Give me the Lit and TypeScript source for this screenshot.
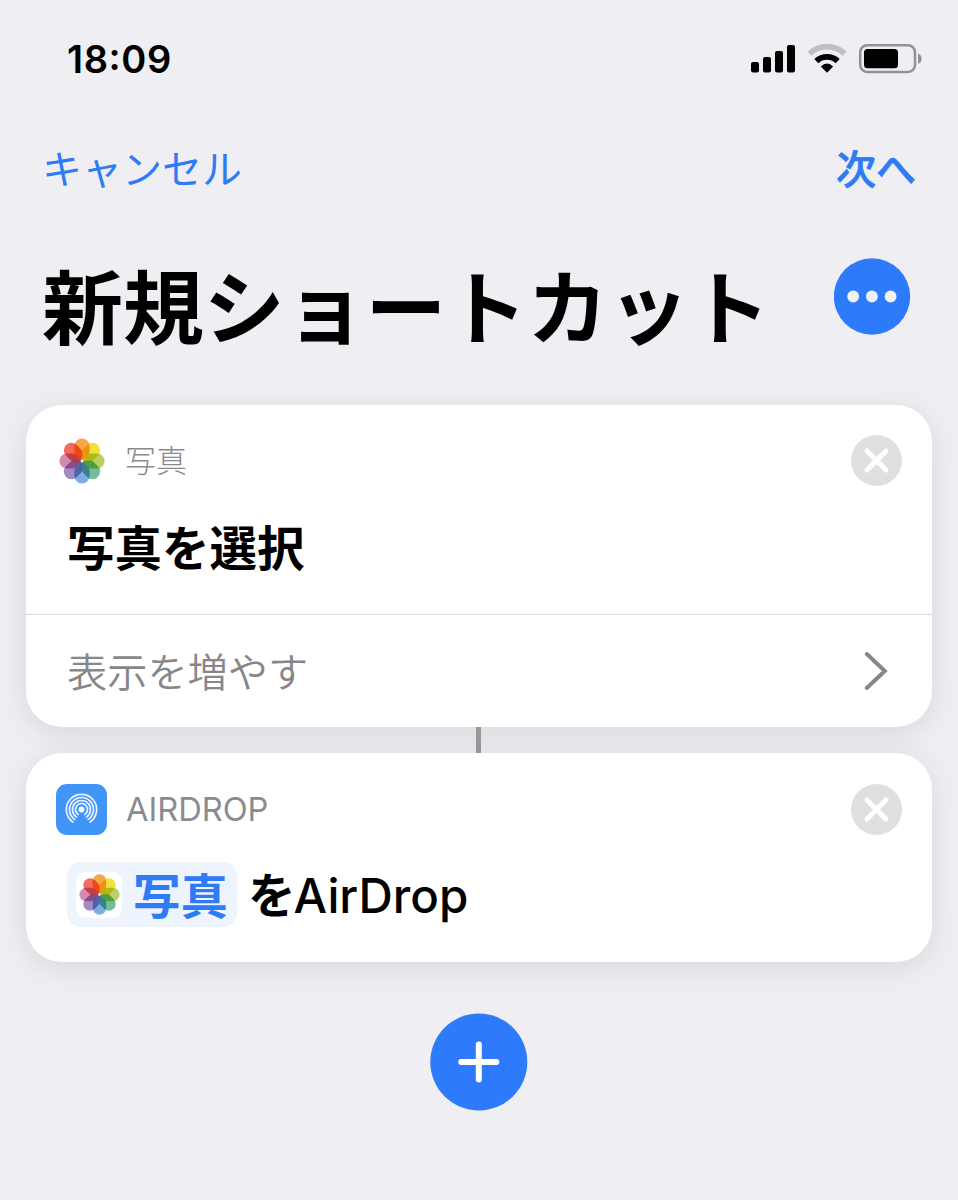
import { LitElement, html, css, svg } from "lit";
import { customElement } from "lit/decorators.js";

const PETALS = ["#f99b30", "#eedf28", "#b0cd50", "#62b792", "#6ea5e0", "#977fbe", "#cd80ac", "#f05c48"];
const PETAL_PATH =
  "M-7.6 -15A7.6 7.6 0 0 1 7.6 -15V-9.4Q7.6 -7.4 6.1 -5.9L1 -1Q0 -0.4 -1 -1L-6.1 -5.9Q-7.6 -7.4 -7.6 -9.4Z";

@customElement("photos-icon")
class PhotosIcon extends LitElement {
  static styles = css`
    :host { display: block; }
    svg { display: block; width: 100%; height: 100%; isolation: isolate; }
    path { mix-blend-mode: multiply; }
  `;
  render() {
    return html`<svg viewBox="-23 -23 46 46">
      ${PETALS.map((c, i) => svg`<path d=${PETAL_PATH} fill=${c} fill-opacity="0.9" transform="rotate(${i * 45})"></path>`)}
      <circle r="1.4" fill="#fff"></circle>
    </svg>`;
  }
}

@customElement("airdrop-icon")
class AirdropIcon extends LitElement {
  static styles = css`
    :host { display: block; width: 51px; height: 51px; border-radius: 11px; background: #4195f7; }
    svg { display: block; }
  `;
  arc(r: number) {
    const a = (34 * Math.PI) / 180;
    const x = r * Math.sin(a);
    const y = r * Math.cos(a);
    return svg`<path d="M${-x} ${y}A${r} ${r} 0 1 1 ${x} ${y}"></path>`;
  }
  render() {
    return html`<svg width="51" height="51" viewBox="-25.5 -25.5 51 51">
      <g fill="none" stroke="#e9f3ff" stroke-width="1.7" stroke-linecap="round">${[6, 9, 12, 15.2].map((r) => this.arc(r))}</g>
      <circle r="2.9" fill="#fff"></circle>
    </svg>`;
  }
}

@customElement("close-badge")
class CloseBadge extends LitElement {
  static styles = css`
    :host { display: block; width: 51px; height: 51px; }
    svg { display: block; }
  `;
  render() {
    return html`<svg width="51" height="51" viewBox="0 0 51 51">
      <circle cx="25.5" cy="25.5" r="25.5" fill="#dfdfe1"></circle>
      <path d="M16 16L35 35M35 16L16 35" stroke="#fff" stroke-width="5" stroke-linecap="round"></path>
    </svg>`;
  }
}

@customElement("app-root")
class AppRoot extends LitElement {
  static styles = css`
    :host {
      display: block;
      height: 1200px;
      overflow: hidden;
      background: #eeeef3;
      color: #000;
      font-family: Inter, "Noto Sans CJK JP", sans-serif;
    }
    * { box-sizing: border-box; }
    svg { display: block; }
    .status { height: 118px; padding: 0 36px 0 67px; display: flex; align-items: center; justify-content: space-between; }
    .time { font-size: 38px; font-weight: 600; line-height: 46px; letter-spacing: 0.6px; display: flex; }
    .colon { margin-top: -3px; }
    .nav { height: 100px; padding: 3px 42px 0 42px; display: flex; justify-content: space-between; align-items: center; color: #2f7bf6; font-size: 40px; line-height: 60px; }
    .next { font-weight: 500; -webkit-text-stroke: 0.7px #2f7bf6; }
    .heading { height: 187px; padding: 0 47px 0 42px; display: flex; align-items: center; justify-content: space-between; }
    h1 { margin: -5px 0 0; font-size: 80.9px; line-height: 110px; font-weight: 700; white-space: nowrap; }
    .more { margin-top: -31px; }
    .cards { padding: 0 26px; display: flex; flex-direction: column; align-items: center; }
    .card { width: 100%; background: #fff; border-radius: 36px; box-shadow: 0 6px 28px rgba(60, 60, 80, 0.13); }
    .link { width: 5px; height: 26px; background: #98989d; margin-right: 1px; }
    .first { height: 322px; }
    .second { height: 209px; }
    .head { height: 111px; padding: 0 30px; display: flex; align-items: center; }
    .second .head { padding-top: 1px; }
    .app { width: 51px; display: flex; justify-content: center; margin-right: 18px; }
    .icon { width: 46px; height: 46px; }
    .name { flex: 1; color: #8b8b8f; font-size: 31px; line-height: 46px; font-weight: 300; padding-top: 1px; }
    .latin { font-size: 32.6px; font-weight: 400; padding: 0 0 0 1px; }
    .title { height: 98px; padding: 0 41px; font-size: 47.5px; line-height: 65px; font-weight: 700; }
    .show { height: 113px; border-top: 1px solid #d9d9dc; padding: 0 44px 0 41px; display: flex; align-items: center; justify-content: space-between; color: #87878a; font-size: 40.2px; line-height: 60px; font-weight: 350; }
    .show span { padding-top: 4px; }
    .action { display: flex; align-items: center; height: 65px; margin-top: -2px; padding-left: 41px; font-size: 47.5px; line-height: 64px; font-weight: 500; }
    .token { display: flex; align-items: center; height: 65px; width: 170px; border-radius: 14px; background: #edf4fe; color: #2f7bf6; padding-left: 9px; font-weight: 700; margin-right: 11px; }
    .token span { padding-top: 5px; }
    .chip { width: 46px; height: 46px; border-radius: 9px; background: #fff; padding: 2.5px; margin-right: 11px; }
    .ja { font-weight: 700; padding-top: 3px; }
    .en { margin-left: -2px; padding-top: 3px; }
    .add { margin: 51px 0 0; display: flex; justify-content: center; }
  `;
  render() {
    return html`
      <div class="status">
        <div class="time"><span>18</span><span class="colon">:</span><span>09</span></div>
        <svg width="172" height="34" viewBox="750 42 172 34">
          <rect x="751" y="62" width="8" height="10.6" rx="2"></rect>
          <rect x="763" y="57" width="8" height="15.6" rx="2"></rect>
          <rect x="775" y="51" width="8" height="21.6" rx="2"></rect>
          <rect x="787" y="45" width="8" height="27.6" rx="2"></rect>
          <path d="M809.4 53.6A25.8 25.8 0 0 1 844.6 53.6" fill="none" stroke="#c0c0c4" stroke-width="5.6"></path>
          <path d="M816.3 61.1A15.6 15.6 0 0 1 837.7 61.1" fill="none" stroke="#000" stroke-width="5.8"></path>
          <path d="M820.8 66.4Q827 60.6 833.2 66.4L827 72.8Z"></path>
          <rect x="860.2" y="45.2" width="54.8" height="26.8" rx="7" fill="none" stroke="#929296" stroke-width="2.5"></rect>
          <rect x="864" y="49" width="34" height="19.3" rx="3.5"></rect>
          <path d="M918 53.5Q921.6 55 921.6 58.7T918 63.9Z" fill="#929296"></path>
        </svg>
      </div>
      <div class="nav"><span>キャンセル</span><span class="next">次へ</span></div>
      <div class="heading">
        <h1>新規ショートカット</h1>
        <svg class="more" width="77" height="77" viewBox="0 0 77 77">
          <circle cx="38" cy="38.5" r="38.2" fill="#2d7bfb"></circle>
          <g fill="#f2f2f6"><circle cx="19.2" cy="38.5" r="5.9"></circle><circle cx="37.9" cy="38.5" r="5.9"></circle><circle cx="56.6" cy="38.5" r="5.9"></circle></g>
        </svg>
      </div>
      <div class="cards">
        <section class="card first">
          <div class="head">
            <div class="app"><photos-icon class="icon"></photos-icon></div>
            <div class="name">写真</div>
            <close-badge></close-badge>
          </div>
          <div class="title">写真を選択</div>
          <div class="show">
            <span>表示を増やす</span>
            <svg width="24" height="40" viewBox="0 0 24 40"><path d="M2.8 3L20.8 20L2.8 37" fill="none" stroke="#87878a" stroke-width="4" stroke-linecap="round" stroke-linejoin="miter"></path></svg>
          </div>
        </section>
        <div class="link"></div>
        <section class="card second">
          <div class="head">
            <div class="app"><airdrop-icon></airdrop-icon></div>
            <div class="name latin">AIRDROP</div>
            <close-badge></close-badge>
          </div>
          <div class="action">
            <span class="token"><photos-icon class="chip"></photos-icon><span>写真</span></span><span class="ja">を</span><span class="en">AirDrop</span>
          </div>
        </section>
      </div>
      <div class="add">
        <svg width="98" height="98" viewBox="0 0 98 98">
          <circle cx="48.8" cy="49" r="48.5" fill="#2d7bfb"></circle>
          <path d="M48.8 31.5V66.5M31.3 49H66.3" stroke="#fff" stroke-width="6" stroke-linecap="round"></path>
        </svg>
      </div>
    `;
  }
}
